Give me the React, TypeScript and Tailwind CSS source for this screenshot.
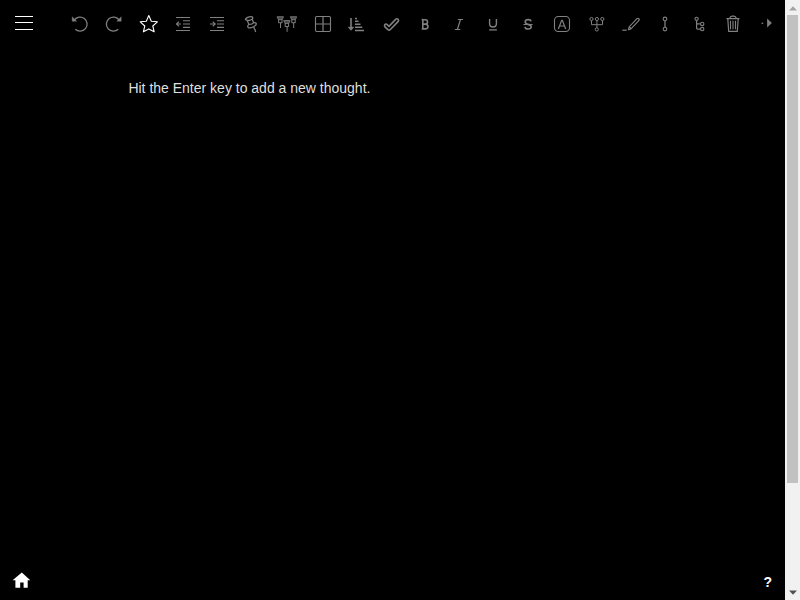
import type { ReactNode } from "react";

/* Toolbar glyphs are drawn around the centre of a 34x48 cell. */
function Tool({ label, className = "", children }: { label: string; className?: string; children: ReactNode }) {
  return (
    <button aria-label={label} className={`h-12 w-[34px] shrink-0 text-[#808080] ${className}`}>
      <svg width="34" height="48" viewBox="-17 -24 34 48" fill="none" stroke="currentColor" strokeWidth="1" className="block">
        {children}
      </svg>
    </button>
  );
}

function Pin() {
  return (
    <>
      <path d="M-3.2 -3.3H3.2L1.9 -.3H-1.9Z" fill="currentColor" fillOpacity=".6" strokeWidth=".8" />
      <path d="M-1.6 -.5L-1.8 2.7H1.8L1.6 -.5M.2 3V8" strokeWidth="1" />
    </>
  );
}

function Toolbar() {
  return (
    <div className="flex">
      <Tool label="Undo">
        <path d="M-5.7 -3.8A7 7 0 1 1 -4.7 5.2" strokeWidth="1.3" />
        <path d="M-7.8 -7.2L-3.4 -2.8H-7.8Z" fill="currentColor" strokeWidth=".4" />
      </Tool>
      <Tool label="Redo">
        <path d="M5.2 -3.8A7 7 0 1 0 4.2 5.2" strokeWidth="1.3" />
        <path d="M7.2 -7.2L2.8 -2.8H7.2Z" fill="currentColor" strokeWidth=".4" />
      </Tool>
      <Tool label="Favorite" className="ml-px text-white">
        <path d="M-.2 -8.5L2.3 -2.8L8.4 -2.2L3.8 2L5.2 7.8L-.2 4.9L-5.6 7.8L-4.2 2L-8.8 -2.2L-2.7 -2.8Z" strokeWidth="1.1" strokeLinejoin="round" />
      </Tool>
      <Tool label="Outdent">
        <path d="M-7 -6.5H7M0 -3.3H7M0 0H7M0 3.3H7M-7 6.5H7" strokeWidth="1.15" />
        <path d="M-2 0H-6.5M-4 -2.3L-6.5 0L-4 2.3" strokeWidth="1.15" />
      </Tool>
      <Tool label="Indent">
        <path d="M-7 -6.5H7M0 -3.3H7M0 0H7M0 3.3H7M-7 6.5H7" strokeWidth="1.15" />
        <path d="M-7 0H-2.3M-4.3 -2.3L-1.8 0L-4.3 2.3" strokeWidth="1.15" />
      </Tool>
      <Tool label="Pin">
        <path d="M-5.6 -4.6Q-5.2 -6.4 -1.8 -7.2Q1.4 -7.7 1.9 -6.3Q1.7 -4.6 -1.5 -3.7Q-4.8 -3.2 -5.6 -4.6ZM-3.7 -3.5L-2.2 .4M1.3 -4.8L2.5 -1.2M-2.2 .4Q-4 2 -2.8 3.6Q-1 4.3 2.4 2.7Q5.8 1 5.2 -.6Q4.4 -1.8 2.5 -1.2Q1.6 .6 -2.2 .4M3.2 3Q2.7 4.5 4 5.6L4.6 8" strokeWidth="1.25" />
      </Tool>
      <Tool label="Pin all" className="ml-[2px]">
        <g transform="translate(-6.7 -4)"><Pin /></g>
        <g transform="translate(-.1 -.2)"><Pin /></g>
        <g transform="translate(6.5 -4)"><Pin /></g>
      </Tool>
      <Tool label="Table" className="ml-[2px]">
        <rect x="-7.5" y="-7.5" width="15" height="15" rx="1.2" strokeWidth="1.1" />
        <path d="M0 -7.5V7.5M-7.5 0H7.5" strokeWidth="1.2" />
      </Tool>
      <Tool label="Sort">
        <path d="M-6 -6V5" strokeWidth="1.6" />
        <path d="M-8.6 3.3L-6 6.3L-3.4 3.3Z" fill="currentColor" strokeWidth=".8" />
        <path d="M-2 -5.5H0M-2 -2.7H1.5M-2 .2H3.5M-2 3.2H5.3M-2 6.5H7" strokeWidth="1.4" />
      </Tool>
      <Tool label="Note">
        <path d="M-4.4 .2L-2 2.3L4.8 -4.8Q6 -5.7 7.2 -4.6Q8 -3.6 7.2 -2.6L-.8 5.7Q-2 6.5 -3.1 5.7L-6 2.9Q-6.9 1.7 -6.2 .6Q-5.3 -.4 -4.4 .2Z" strokeWidth="1.6" />
      </Tool>
      <Tool label="Bold">
        <path d="M-2.4 -4.3H.4Q2.5 -4.3 2.5 -2.1Q2.5 .1 .4 .1H-2.2M.4 .1Q3 .2 3 2.6Q3 4.9 .4 4.9H-2.4M-2.2 -5V5.6M-3.3 -4.4H-2M-3.3 5H-2" strokeWidth="1.6" />
      </Tool>
      <Tool label="Italic">
        <path d="M-1.2 -4.5H4M-4.1 5.5H1.3M1.5 -4.5L-1.6 5.5" strokeWidth="1.2" />
      </Tool>
      <Tool label="Underline">
        <path d="M-3.4 -5V-.5Q-3.4 3 0 3Q3.4 3 3.4 -.5V-5" strokeWidth="1.4" />
        <path d="M-3.8 5.9H3.9" strokeWidth="1.3" />
      </Tool>
      <Tool label="Strikethrough" className="ml-px">
        <path d="M3 -2.6Q2.7 -4.4 .3 -4.4Q-2.8 -4.4 -2.8 -2.3Q-2.8 -.5 0 .4Q3.2 1.2 3.2 3Q3 5 .2 5Q-2.7 5 -3 2.8" strokeWidth="1.6" />
        <path d="M-4.6 .5H4.6" strokeWidth="1.1" />
      </Tool>
      <Tool label="Text color">
        <rect x="-7.5" y="-7.5" width="15" height="15" rx="3.7" strokeWidth="1.1" />
        <path d="M-3.7 5L-.3 -3.7H.3L3.7 5M-2.5 2H2.5" strokeWidth="1.2" />
      </Tool>
      <Tool label="Context view" className="ml-px">
        <circle cx="-5.5" cy="-5" r="1.6" />
        <circle cx="-.1" cy="-5" r="1.6" />
        <circle cx="5.3" cy="-5" r="1.6" />
        <circle cx="-.2" cy="5.4" r="1.6" />
        <path d="M-5.5 -3.3V.7H5.5V-3.3M-.1 -3.3V3.8" />
      </Tool>
      <Tool label="Edit">
        <path d="M-2.7 6L-1.7 2.7L6 -5.3Q7.1 -6.2 8 -5.2Q8.7 -4.3 7.8 -3.4L0 4.8L-2.7 6M-1.7 2.7L0 4.8" strokeWidth="1.2" />
        <path d="M-8.7 6.2H-4.3" strokeWidth="1.2" />
      </Tool>
      <Tool label="Subthought">
        <circle cx="0" cy="-5.1" r="1.8" strokeWidth="1.1" />
        <circle cx="0" cy="5.1" r="1.8" strokeWidth="1.1" />
        <path d="M0 -3.2V3.2" strokeWidth="1.3" />
      </Tool>
      <Tool label="Context tree">
        <circle cx="-2.4" cy="-5.2" r="1.6" strokeWidth="1.1" />
        <circle cx="3.2" cy="-.1" r="1.7" strokeWidth="1.1" />
        <circle cx="3.2" cy="5.1" r="1.7" strokeWidth="1.1" />
        <path d="M-2.4 -3.6V4Q-2.4 5.2 -1.2 5.2H1.4M-2.4 -.1H1.4" strokeWidth="1.2" />
      </Tool>
      <Tool label="Delete">
        <path d="M-6.5 -5.4H6.5M-3.2 -5.8Q-2.8 -7.9 -.8 -7.9H.8Q2.8 -7.9 3.2 -5.8M-5.2 -5L-4.3 7.4H4.3L5.2 -5" strokeWidth="1.2" />
        <path d="M-2.5 -3.2V5.2M0 -3.2V5.2M2.5 -3.2V5.2" strokeWidth="1.1" />
      </Tool>
      <Tool label="More tools">
        <path d="M-5.4 -.7H-3.8" strokeWidth="1.3" />
        <path d="M.1 -5.4L4.9 -.9L.1 3.6Z" fill="currentColor" stroke="none" />
      </Tool>
    </div>
  );
}

export default function App() {
  return (
    <div className="flex h-screen w-full overflow-hidden bg-black font-['Liberation_Sans',Arial,sans-serif]">
      <div className="flex min-w-0 flex-1 flex-col">
        <header className="flex h-12 shrink-0">
          <button aria-label="Menu" className="w-[63px] shrink-0 text-white">
            <svg width="63" height="48" viewBox="0 0 63 48" className="block" fill="none" stroke="currentColor">
              <path d="M15 16.5H33M15 22.5H33M15 29.5H33" />
            </svg>
          </button>
          <Toolbar />
        </header>
        <main className="flex-1 pl-[128.4px] pt-[30px]">
          <p className="text-[14px] leading-5 text-[#dfdfdf]">Hit the Enter key to add a new thought.</p>
        </main>
        <footer className="flex h-10 shrink-0 items-center justify-between pl-3 pr-[13px] text-white">
          <svg width="19" height="16" viewBox="0 0 19 16" aria-label="Home">
            <path d="M9.8 .5L18.3 8.2H15.7V15.7H11.6V10.4H8.2V15.7H3.4V8.2H.6Z" fill="currentColor" />
          </svg>
          <span className="pt-[3px] text-[14px] font-bold leading-5">?</span>
        </footer>
      </div>
      <aside className="flex w-[15px] shrink-0 flex-col items-center bg-[#f1f1f1]">
        <div className="flex h-[15px] items-center justify-center pt-px">
          <svg width="8" height="5" viewBox="0 0 8 5"><path d="M0 4.5L4 .3L8 4.5Z" fill="#a3a3a3" /></svg>
        </div>
        <div className="h-[468px] w-[11px] bg-[#c1c1c1]" />
        <div className="mt-auto flex h-[15px] items-center justify-center">
          <svg width="8" height="5" viewBox="0 0 8 5"><path d="M0 .5L4 4.7L8 .5Z" fill="#505050" /></svg>
        </div>
      </aside>
    </div>
  );
}
